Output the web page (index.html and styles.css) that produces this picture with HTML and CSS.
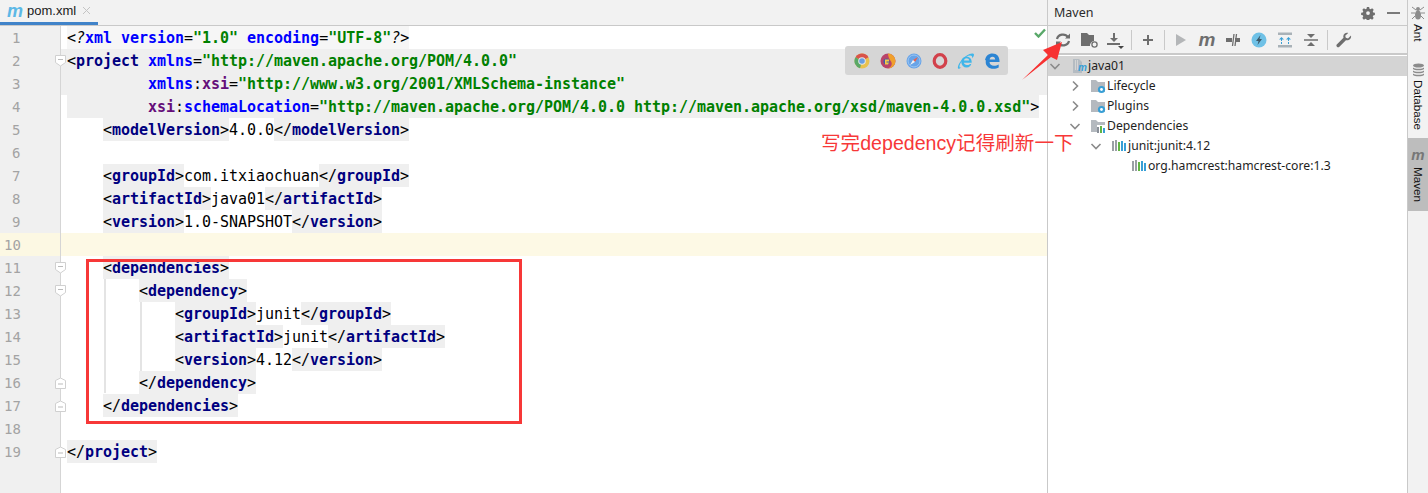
FILE: index.html
```html
<!DOCTYPE html>
<html lang="en">
<head>
<meta charset="utf-8">
<title>pom.xml - Maven</title>
<link rel="stylesheet" href="styles.css">
</head>
<body>
<div class="ide">
  <main class="editor">
    <div class="tabbar">
      <div class="tab"><span class="tab-m">m</span><span class="tab-name">pom.xml</span>
        <svg class="tab-x" width="9" height="9" viewBox="0 0 9 9"><path d="M1 1l7 7M8 1l-7 7" stroke="#c4c4c4" fill="none"/></svg>
      </div>
    </div>
    <div class="body">
      <div class="gutter">
        <div class="num">1</div>
        <div class="num">2<svg class="fold" width="11" height="12" viewBox="0 0 11 12"><path d="M.5.5h10v7l-5 3.500-5-3.500z" fill="#fff" stroke="#d0d0d0"/><path d="M3 4.500h5" stroke="#bbb"/></svg></div>
        <div class="num">3</div>
        <div class="num">4</div>
        <div class="num">5</div>
        <div class="num">6</div>
        <div class="num">7</div>
        <div class="num">8</div>
        <div class="num">9</div>
        <div class="num cur">10</div>
        <div class="num">11<svg class="fold" width="11" height="12" viewBox="0 0 11 12"><path d="M.5.5h10v7l-5 3.500-5-3.500z" fill="#fff" stroke="#d0d0d0"/><path d="M3 4.500h5" stroke="#bbb"/></svg></div>
        <div class="num">12<svg class="fold" width="11" height="12" viewBox="0 0 11 12"><path d="M.5.5h10v7l-5 3.500-5-3.500z" fill="#fff" stroke="#d0d0d0"/><path d="M3 4.500h5" stroke="#bbb"/></svg></div>
        <div class="num">13</div>
        <div class="num">14</div>
        <div class="num">15</div>
        <div class="num">16<svg class="fold" width="11" height="12" viewBox="0 0 11 12"><path d="M.5 11.500h10v-8l-5-2.500-5 2.500z" fill="#fff" stroke="#d0d0d0"/><path d="M3 7h5" stroke="#bbb"/></svg></div>
        <div class="num">17<svg class="fold" width="11" height="12" viewBox="0 0 11 12"><path d="M.5 11.500h10v-8l-5-2.500-5 2.500z" fill="#fff" stroke="#d0d0d0"/><path d="M3 7h5" stroke="#bbb"/></svg></div>
        <div class="num">18</div>
        <div class="num">19<svg class="fold" width="11" height="12" viewBox="0 0 11 12"><path d="M.5 11.500h10v-8l-5-2.500-5 2.500z" fill="#fff" stroke="#d0d0d0"/><path d="M3 7h5" stroke="#bbb"/></svg></div>
      </div>
      <div class="code">
        <div class="line"><span class="pi"><i>&lt;?</i><span class="a">xml</span> <span class="a">version</span>=<span class="v">"1.0"</span> <span class="a">encoding</span>=<span class="v">"UTF-8"</span><i>?&gt;</i></span></div>
        <div class="line band">&lt;<span class="n">project</span> <span class="a">xmlns</span>=<span class="v">"http://maven.apache.org/POM/4.0.0"</span></div>
        <div class="line band">         <span class="a">xmlns</span>:<span class="p">xsi</span>=<span class="v">"http://www.w3.org/2001/XMLSchema-instance"</span></div>
        <div class="line"><span class="t">         <span class="p">xsi</span>:<span class="a">schemaLocation</span>=<span class="v">"http://maven.apache.org/POM/4.0.0 http://maven.apache.org/xsd/maven-4.0.0.xsd"</span>&gt;</span></div>
        <div class="line">    <span class="t">&lt;<span class="n">modelVersion</span>&gt;</span>4.0.0<span class="t">&lt;/<span class="n">modelVersion</span>&gt;</span></div>
        <div class="line"></div>
        <div class="line">    <span class="t">&lt;<span class="n">groupId</span>&gt;</span>com.itxiaochuan<span class="t">&lt;/<span class="n">groupId</span>&gt;</span></div>
        <div class="line">    <span class="t">&lt;<span class="n">artifactId</span>&gt;</span>java01<span class="t">&lt;/<span class="n">artifactId</span>&gt;</span></div>
        <div class="line">    <span class="t">&lt;<span class="n">version</span>&gt;</span>1.0-SNAPSHOT<span class="t">&lt;/<span class="n">version</span>&gt;</span></div>
        <div class="line cur"></div>
        <div class="line">    <span class="t">&lt;<span class="n">dependencies</span>&gt;</span></div>
        <div class="line">        <span class="t">&lt;<span class="n">dependency</span>&gt;</span></div>
        <div class="line">            <span class="t">&lt;<span class="n">groupId</span>&gt;</span>junit<span class="t">&lt;/<span class="n">groupId</span>&gt;</span></div>
        <div class="line">            <span class="t">&lt;<span class="n">artifactId</span>&gt;</span>junit<span class="t">&lt;/<span class="n">artifactId</span>&gt;</span></div>
        <div class="line">            <span class="t">&lt;<span class="n">version</span>&gt;</span>4.12<span class="t">&lt;/<span class="n">version</span>&gt;</span></div>
        <div class="line">        <span class="t">&lt;/<span class="n">dependency</span>&gt;</span></div>
        <div class="line">    <span class="t">&lt;/<span class="n">dependencies</span>&gt;</span></div>
        <div class="line"></div>
        <div class="line"><span class="t">&lt;/<span class="n">project</span>&gt;</span></div>
      </div>
      <div class="guide guide-a"></div>
      <div class="guide guide-b"></div>
      <svg class="check" width="12" height="10" viewBox="0 0 12 10"><path d="M1 5l3.500 3.500L11 1.500" fill="none" stroke="#59a869" stroke-width="2.400"/></svg>
      <div class="browsers">
        <svg width="18" height="18" viewBox="0 0 18 18"><circle cx="9" cy="9" r="7.500" fill="#e9c24e"/><path d="M9 9L2.500 5.200A7.500 7.500 0 0 1 15.500 5.200z" fill="#d9534a"/><path d="M9 9L2.500 5.200A7.500 7.500 0 0 0 7 16.300z" fill="#5aa867"/><circle cx="9" cy="9" r="3.800" fill="#e6e6e6"/><circle cx="9" cy="9" r="2.800" fill="#6a9fe0"/></svg>
        <svg width="18" height="18" viewBox="0 0 18 18"><circle cx="9" cy="9" r="7.500" fill="#b9446a"/><path d="M9 1.500A7.500 7.500 0 0 1 16.500 9 7.500 7.500 0 0 1 9 16.500C13 15 14 11 11 8 10 6 9 4 9 1.500z" fill="#f0a02c"/><circle cx="7.500" cy="9.500" r="3" fill="#3d5fa8"/><path d="M6 7.500h4v2H7.500v1H10l-1 2H6z" fill="#f7c948"/></svg>
        <svg width="18" height="18" viewBox="0 0 18 18"><circle cx="9" cy="9" r="7.500" fill="#68a4e8"/><circle cx="9" cy="9" r="6" fill="none" stroke="#9cc6f2"/><path d="M13 5L10 10 8 8z" fill="#e9604f"/><path d="M5 13l3-5 2 2z" fill="#f4f4f4"/></svg>
        <svg width="18" height="18" viewBox="0 0 18 18"><ellipse cx="9" cy="9" rx="5.800" ry="6.300" fill="none" stroke="#d2414b" stroke-width="3.200"/></svg>
        <svg width="18" height="18" viewBox="0 0 18 18"><ellipse cx="9.500" cy="10" rx="5.200" ry="5.500" fill="#3fb6ea"/><path d="M7 8.500h5.200C12 7 11 6.200 9.600 6.200S7.200 7 7 8.500z" fill="#d6d6d6"/><path d="M6.800 10.700h8v1.300h-2c-.5.900-1.800 1.400-3 .9-1.500-.3-2.700-1-3-2.200z" fill="#d6d6d6"/><path d="M1 16.500C0 14 5 5 12.500 2c2.500-1 4.500-.7 4.500.8 0 1-.7 2.200-1.800 3.600.2-1.900-.2-3-2-3C8.500 3.400 2 11.500 2.500 15c.1.500.8.700 1.800.4-1.400.9-2.800 1.600-3.300 1.100z" fill="#3fb6ea"/></svg>
        <svg width="18" height="18" viewBox="0 0 18 18"><path d="M2 8.500C2.500 4 5.500 1.500 9.500 1.500c4.500 0 7 3 7 7.500v1H6.500c.2 2.500 2 3.800 4.500 3.800 1.700 0 3.300-.5 4.700-1.400v3.200c-1.500.9-3.300 1.200-5.200 1.200-4.800 0-7.800-3-7.800-6.800 0-2 1-3.500 2.500-4.500-.8.700-1.400 1.400-1.700 2.300zM6.600 7.600h5.600c0-1.600-1-2.800-2.700-2.800S6.800 6 6.600 7.600z" fill="#2b84d3"/></svg>
      </div>
      <div class="redbox"></div>
      <svg class="arrow" width="50" height="50" viewBox="0 0 50 50"><path d="M2 49L28 24 23 19 42 11 37 29 31 26z" fill="#f73131"/></svg>
      <div class="note">写完depedency记得刷新一下</div>
    </div>
  </main>

  <aside class="maven">
    <div class="panel-head">
      <span class="panel-title">Maven</span>
      <svg class="gear" width="14" height="14" viewBox="0 0 14 14"><path fill-rule="evenodd" d="M5.700 0h2.600l.4 2 1.300.6 1.800-1.100 1.800 1.800-1.100 1.800.6 1.300 1.900.4v2.600l-1.900.4-.6 1.300 1.100 1.800-1.800 1.800-1.800-1.100-1.300.6-.4 1.900H5.700l-.4-1.900-1.300-.6-1.800 1.100L.4 12.700l1.100-1.800-.6-1.300L-1 9.200V6.800l1.900-.4.600-1.300L.4 3.300l1.800-1.800L4 2.600l1.300-.6zM7 4.800a2.200 2.200 0 1 0 0 4.400 2.200 2.200 0 0 0 0-4.400z" fill="#6e6e6e" transform="translate(1 1) scale(.86)"/></svg>
      <span class="minimize"></span>
    </div>
    <div class="toolbar">
      <span class="tool"><svg width="18" height="18" viewBox="0 0 18 18"><path d="M3 8a6 5.500 0 0 1 11-1.800M15 10a6 5.500 0 0 1-11 1.800" fill="none" stroke="#6e6e6e" stroke-width="2.200"/><path d="M16 2.500v5h-5zM2 15.500v-5h5z" fill="#6e6e6e"/></svg></span>
      <span class="tool"><svg width="20" height="18" viewBox="0 0 20 18"><path d="M2 2h6l2 2h5v6a4.500 4.500 0 0 0-4 5H2z" fill="#6e6e6e"/><circle cx="15.500" cy="13.500" r="2.600" fill="none" stroke="#6e6e6e" stroke-width="1.300"/></svg></span>
      <span class="tool"><svg width="20" height="18" viewBox="0 0 20 18"><path d="M9 2v6" stroke="#6e6e6e" stroke-width="2"/><path d="M5 7h8l-4 4z" fill="#6e6e6e"/><path d="M2 13h13" stroke="#6e6e6e" stroke-width="2"/><path d="M13 15h6l-3 3z" fill="#444"/></svg></span>
      <span class="sep"></span>
      <span class="tool"><svg width="14" height="14" viewBox="0 0 14 14"><path d="M7 2v10M2 7h10" stroke="#6e6e6e" stroke-width="2"/></svg></span>
      <span class="sep"></span>
      <span class="tool"><svg width="12" height="14" viewBox="0 0 12 14"><path d="M1 1l10 6-10 6z" fill="#b4b6b8"/></svg></span>
      <span class="tool tool-m">m</span>
      <span class="tool"><svg width="16" height="14" viewBox="0 0 16 14"><path d="M1 5h6v4H1zM10 5h5v4h-5z" fill="#6e6e6e"/><path d="M7.500 13L9 1M10 13L11.500 1" stroke="#6e6e6e" stroke-width="1.300"/></svg></span>
      <span class="tool"><svg width="16" height="16" viewBox="0 0 16 16"><circle cx="8" cy="8" r="7.500" fill="#6fc1e6"/><path d="M9.500 3L5 9h2.500L6.500 13 11 7H8.500z" fill="#3c5a6a"/></svg></span>
      <span class="tool"><svg width="16" height="16" viewBox="0 0 16 16"><path d="M1 .500h14v2.500H1zM1 13h14v2.500H1z" fill="#a9b2b8"/><path d="M4.500 12V7M11.500 12V7" stroke="#389fd6" stroke-dasharray="2 1"/><path d="M2 7.500L4.500 5 7 7.500zM9 7.500L11.500 5 14 7.500z" fill="#389fd6"/></svg></span>
      <span class="tool"><svg width="16" height="16" viewBox="0 0 16 16"><path d="M1 8h14" stroke="#6e6e6e" stroke-width="1.500"/><path d="M4 2h8L8 6zM4 14h8L8 10z" fill="#6e6e6e"/></svg></span>
      <span class="sep"></span>
      <span class="tool"><svg width="16" height="16" viewBox="0 0 16 16"><path d="M15 3.500L12 6.500 9.800 5.800 9.200 3.800 12.200 .900C9.800.200 7.500 1.800 7.300 4.200c0 .6 0 1.100.2 1.600L1 12.300c-.8.800-.8 1.700-.1 2.400s1.700.8 2.500 0l6.500-6.500c2.800.8 5.800-1.500 5.100-4.700z" fill="#6e6e6e"/></svg></span>
    </div>
    <ul class="tree">
      <li class="row row-sel"><svg class="chev" width="12" height="12" viewBox="0 0 12 12"><path d="M1.500 4L6 8.500 10.500 4" fill="none" stroke="#8a8a8a" stroke-width="1.600"/></svg>
        <svg class="ico" width="16" height="16" viewBox="0 0 16 16"><path d="M2 1h6l3 3v11H2z" fill="#b5bcc2"/><path d="M4 2h1v10H4zM6 2h1v10H6z" fill="#d5d5d5"/></svg><span class="tree-m">m</span><span>java01</span></li>
      <li class="row d1"><svg class="chev" width="12" height="12" viewBox="0 0 12 12"><path d="M4 1.500L8.500 6 4 10.500" fill="none" stroke="#8a8a8a" stroke-width="1.600"/></svg>
        <svg class="ico" width="16" height="16" viewBox="0 0 16 16"><path d="M1 2h5l2 2h7v10H1z" fill="#b4b9bf"/><circle cx="11.500" cy="11.500" r="3.600" fill="#389fd6"/><circle cx="11.500" cy="11.500" r="1.400" fill="#fff"/></svg><span>Lifecycle</span></li>
      <li class="row d1"><svg class="chev" width="12" height="12" viewBox="0 0 12 12"><path d="M4 1.500L8.500 6 4 10.500" fill="none" stroke="#8a8a8a" stroke-width="1.600"/></svg>
        <svg class="ico" width="16" height="16" viewBox="0 0 16 16"><path d="M1 2h5l2 2h7v10H1z" fill="#b4b9bf"/><circle cx="11.500" cy="11.500" r="3.600" fill="#389fd6"/><circle cx="11.500" cy="11.500" r="1.400" fill="#fff"/></svg><span>Plugins</span></li>
      <li class="row d1"><svg class="chev" width="12" height="12" viewBox="0 0 12 12"><path d="M1.500 4L6 8.500 10.500 4" fill="none" stroke="#8a8a8a" stroke-width="1.600"/></svg>
        <svg class="ico" width="16" height="16" viewBox="0 0 16 16"><path d="M1 2h5l2 2h7v10H1z" fill="#b4b9bf"/><path d="M7 7h8v8H7z" fill="#fff"/><path d="M7 9h2v6H7z" fill="#8a9099"/><path d="M10 8h2v7h-2z" fill="#62b543"/><path d="M13 10h2v5h-2z" fill="#389fd6"/></svg><span>Dependencies</span></li>
      <li class="row d2"><svg class="chev" width="12" height="12" viewBox="0 0 12 12"><path d="M1.500 4L6 8.500 10.500 4" fill="none" stroke="#8a8a8a" stroke-width="1.600"/></svg>
        <svg class="ico" width="16" height="16" viewBox="0 0 16 16"><path d="M1 3h2v10H1zM4 2h2v11H4z" fill="#9aa0a6"/><path d="M7 4h2v9H7z" fill="#62b543"/><path d="M10 3h2v10h-2zM13 5h2v8h-2z" fill="#389fd6"/></svg><span>junit:junit:4.12</span></li>
      <li class="row d3">
        <svg class="ico" width="16" height="16" viewBox="0 0 16 16"><path d="M1 3h2v10H1zM4 2h2v11H4z" fill="#9aa0a6"/><path d="M7 4h2v9H7z" fill="#62b543"/><path d="M10 3h2v10h-2zM13 5h2v8h-2z" fill="#389fd6"/></svg><span>org.hamcrest:hamcrest-core:1.3</span></li>
    </ul>
  </aside>

  <nav class="stripe">
    <div class="stripe-item item-ant">
      <svg width="14" height="14" viewBox="0 0 14 14"><ellipse cx="7" cy="3" rx="2" ry="2" fill="#8c8c8c"/><ellipse cx="7" cy="9" rx="3" ry="4.500" fill="#8c8c8c"/><path d="M1 1l4 3M13 1L9 4M0 7h4M14 7h-4M1 13l3-3M13 13l-3-3" stroke="#8c8c8c"/></svg>
      <span class="vtext">Ant</span>
    </div>
    <div class="stripe-item item-db">
      <svg width="13" height="14" viewBox="0 0 13 14"><ellipse cx="6.500" cy="2.500" rx="5.500" ry="2" fill="#8c8c8c"/><path d="M1 4.500c1 1.800 10 1.800 11 0v1.500c-1 1.800-10 1.800-11 0zM1 7.500c1 1.800 10 1.800 11 0V9c-1 1.800-10 1.800-11 0zM1 10.500c1 1.800 10 1.800 11 0V12c-1 1.800-10 1.800-11 0z" fill="#8c8c8c"/></svg>
      <span class="vtext">Database</span>
    </div>
    <div class="stripe-item item-mvn">
      <span class="stripe-m">m</span>
      <span class="vtext">Maven</span>
    </div>
  </nav>
</div>
</body>
</html>
```
FILE: styles.css
```css
* { box-sizing: border-box; }
html, body { margin: 0; padding: 0; background: #fff; }
.ide { display: flex; width: 1428px; height: 493px; overflow: hidden; font-family: "Liberation Sans", "Noto Sans", sans-serif; color: #000; }

.editor { width: 1047px; flex: none; display: flex; flex-direction: column; }
.tabbar { height: 26px; flex: none; background: #f2f2f2; border-bottom: 1px solid #c9c9c9; display: flex; }
.tab { width: 98px; height: 25px; background: #f2f2f2; border-bottom: 3px solid #4083c9; display: flex; align-items: center; padding-left: 7px; }
.tab-m { font: italic bold 18px/20px "Liberation Sans", sans-serif; color: #5cb8e6; width: 20px; }
.tab-name { font: 13px/16px "Liberation Sans", sans-serif; color: #1a1a1a; margin-top: -1px; }
.tab-x { margin-left: 6px; margin-top: -1px; }

.body { position: relative; flex: 1; display: flex; min-height: 0; }
.gutter { width: 61px; flex: none; background: #f0f0f0; border-right: 1px solid #d5d5d5; font: 14px/25px "DejaVu Sans Mono", monospace; color: #a3a3a3; }
.num { position: relative; height: 23px; width: 60px; padding-left: 4px; }
.num:nth-child(-n+9) { padding-left: 12px; }
.num.cur { background: #fcf8e3; }
.fold { position: absolute; left: 55px; top: 6px; z-index: 2; }

.code { flex: 1; min-width: 0; font: 15px/25px "DejaVu Sans Mono", monospace; letter-spacing: -.03px; }
.line { height: 23px; padding-left: 6px; white-space: pre; }
.line.band { background: #efefef; }
.line.cur { background: #fdf9e5; }
.t, .pi { display: inline-block; height: 23px; background: #efefef; }
.pi { background: #f6f6f6; }
.pi i { font-style: italic; }
.n { color: #000080; font-weight: 700; }
.a { color: #0000ff; font-weight: 700; }
.v { color: #008000; font-weight: 700; }
.p { color: #660e7a; font-weight: 700; }

.guide { position: absolute; width: 2px; background: #e4e4e4; }
.guide-a { left: 104px; top: 253px; height: 114px; }
.guide-b { left: 140px; top: 276px; height: 69px; }
.check { position: absolute; left: 1034px; top: 2px; }
.browsers { position: absolute; left: 845px; top: 20px; width: 163px; height: 29px; background: #d6d6d6; border-radius: 3px; display: flex; align-items: center; padding-left: 8px; gap: 8px; }
.redbox { position: absolute; left: 86px; top: 233px; width: 436px; height: 165px; border: 3px solid #f73838; }
.arrow { position: absolute; left: 1020px; top: 5px; z-index: 3; overflow: visible; }
.note { position: absolute; left: 821px; top: 105px; font: 19.600px/24px "Liberation Sans", "Noto Sans CJK SC", sans-serif; color: #f73838; white-space: nowrap; }

.maven { width: 360px; flex: none; border-left: 1px solid #c9c9c9; display: flex; flex-direction: column; background: #fff; }
.panel-head { height: 26px; flex: none; background: #f2f2f2; border-bottom: 1px solid #c9c9c9; display: flex; align-items: center; padding: 0 7px 0 6px; }
.panel-title { font: 12.500px/1 "Noto Sans", sans-serif; color: #2a2a2a; flex: 1; padding-top: 2px; }
.gear { margin-right: 12px; }
.minimize { width: 13px; height: 2px; background: #7a7a7a; }
.toolbar { height: 29px; flex: none; background: #f2f2f2; border-bottom: 2px solid #c9c9c9; display: flex; align-items: center; padding-left: 2px; }
.tool { width: 26px; height: 26px; display: flex; align-items: center; justify-content: center; flex: none; }
.tool-m { font: italic bold 19px/26px "Liberation Sans", sans-serif; color: #6e6e6e; }
.sep { width: 1px; height: 20px; background: #c9c9c9; margin: 0 3px; flex: none; }
.tree { list-style: none; margin: 1px 0 0; padding: 0; font: 12.200px/20px "Noto Sans", sans-serif; color: #1e1e1e; }
.row { position: relative; height: 20px; display: flex; align-items: center; padding-left: 1px; white-space: nowrap; }
.row-sel { background: #d4d4d4; }
.row-sel .chev { margin-right: 10px; }
.chev { width: 12px; flex: none; }
.ico { margin-right: 1px; flex: none; }
.tree-m { position: absolute; left: 30px; top: 5px; font: italic bold 10px/14px "Liberation Sans", sans-serif; color: #389fd6; }
.d1 { padding-left: 21px; }
.d1 .chev { margin-right: 9px; }
.d2 { padding-left: 42px; }
.d2 .chev { margin-right: 9px; }
.d3 { padding-left: 83px; }

.stripe { flex: 1; background: #f2f2f2; border-left: 1px solid #c9c9c9; display: flex; flex-direction: column; }
.stripe-item { display: flex; flex-direction: column; align-items: center; }
.vtext { writing-mode: vertical-rl; font: 11.700px/14px "Liberation Sans", sans-serif; color: #111; }
.item-ant { padding-top: 6px; gap: 4px; height: 57px; }
.item-db { padding-top: 6px; gap: 3px; height: 81px; }
.item-mvn { background: #bdbdbd; height: 73px; padding-top: 9px; gap: 4px; }
.stripe-m { font: italic bold 15px/16px "Liberation Sans", sans-serif; color: #777; }
```
